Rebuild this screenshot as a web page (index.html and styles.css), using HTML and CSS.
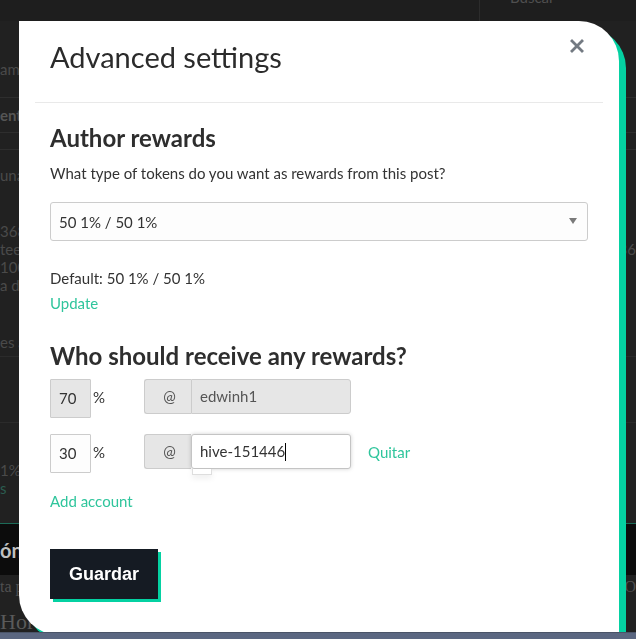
FILE: index.html
```html
<!DOCTYPE html>
<html lang="es">
<head>
<meta charset="utf-8">
<title>Advanced settings</title>
<link rel="stylesheet" href="styles.css">
</head>
<body>
<div class="page">
  <div class="topbar">
    <div class="search"><span class="search-text">Buscar</span></div>
  </div>
  <div class="bg-row r1"><span>amu</span><span></span></div>
  <div class="bg-row r2"><span class="b">ent</span><span></span></div>
  <div class="bg-row r3"><span></span><span></span></div>
  <div class="bg-block r4">
    <div class="bg-line">una</div>
    <div class="bg-para">
      <div class="bg-pl"><span>368</span><span></span></div>
      <div class="bg-pl"><span>tee</span><span>36</span></div>
      <div class="bg-pl"><span>100</span><span></span></div>
      <div class="bg-pl"><span>a de</span><span></span></div>
    </div>
  </div>
  <div class="bg-row r5"><span>es a</span><span></span></div>
  <div class="bg-row r6"><span></span><span></span></div>
  <div class="bg-block r7">
    <div class="bg-line">1%</div>
    <div class="bg-line green">s</div>
  </div>
  <div class="bg-dark"><span>ón</span></div>
  <div class="bg-row r8"><span>ta p</span><span>O</span></div>
  <div class="bg-hor">Hor</div>
</div>
<div class="bottombar"></div>

<div class="modal">
  <div class="modal-header">
    <h1 class="modal-title">Advanced settings</h1>
    <button class="close" type="button" aria-label="Close">
      <svg width="14" height="14" viewBox="0 0 14 14"><path d="M2 2 L12 12 M12 2 L2 12" stroke="#737a82" stroke-width="2.8" stroke-linecap="square"/></svg>
    </button>
  </div>
  <div class="modal-body">
    <h2 class="section-title first">Author rewards</h2>
    <p class="text">What type of tokens do you want as rewards from this post?</p>
    <div class="select">
      <span>50 1% / 50 1%</span>
      <svg class="caret" width="8" height="6" viewBox="0 0 8 6"><path d="M0 0 H8 L4 6 Z" fill="#7a7a7a"/></svg>
    </div>
    <p class="text default">Default: 50 1% / 50 1%</p>
    <a class="link update">Update</a>

    <h2 class="section-title second">Who should receive any rewards?</h2>
    <div class="benef-row">
      <div class="pct disabled">70</div>
      <span class="pct-sign">%</span>
      <div class="acct disabled">
        <span class="at">@</span>
        <span class="acct-input">edwinh1</span>
      </div>
    </div>
    <div class="benef-row">
      <div class="pct">30</div>
      <span class="pct-sign">%</span>
      <div class="acct">
        <span class="at">@</span>
        <span class="acct-input focus">hive-151446<span class="cursor"></span><span class="popup"></span></span>
      </div>
      <a class="link quitar">Quitar</a>
    </div>
    <a class="link add">Add account</a>
    <div class="actions">
      <button class="save" type="button">Guardar</button>
    </div>
  </div>
</div>
</body>
</html>
```
FILE: styles.css
```css
* { box-sizing: border-box; }
html, body { margin: 0; padding: 0; }
body {
  width: 636px;
  height: 639px;
  overflow: hidden;
  background: #212121;
  font-family: Lato, "Open Sans", sans-serif;
}

/* background page */
.page { color: #4a4a4a; font-size: 15px; }
.topbar {
  height: 21px;
  overflow: hidden;
  display: flex;
  align-items: flex-end;
  justify-content: flex-end;
  background: #1e1e1e;
}
.search {
  height: 40px;
  width: 157px;
  border-left: 1px solid #2c2c2c;
  display: flex;
  align-items: flex-end;
  padding: 0 0 16px 30px;
  flex-shrink: 0;
}
.search-text { color: #4f4f4f; font-size: 15px; line-height: 16px; }
.bg-row {
  display: flex;
  justify-content: space-between;
  align-items: center;
  border-bottom: 1px solid #2e2e2e;
}
.bg-row.r1 { height: 77px; padding-top: 20px; }
.bg-row.r2 { height: 35px; color: #555; }
.bg-row.r2 .b { font-weight: 700; }
.bg-row.r3 { height: 17px; }
.bg-block.r4 { padding-top: 16px; height: 177px; }
.bg-line { line-height: 18px; }
.bg-para { margin-top: 38px; }
.bg-pl { display: flex; justify-content: space-between; line-height: 18px; }
.bg-row.r5 { height: 30px; border-bottom-color: #2b2b2b; }
.bg-row.r6 { height: 66px; border-bottom-color: #2b2b2b; }
.bg-block.r7 { height: 100px; padding-top: 38px; }
.bg-line.green { color: #2b5d50; }
.bg-dark {
  height: 52px;
  background: #0c0c0c;
  border-top: 1px solid #1c6b58;
  display: flex;
  align-items: center;
  color: #bfbfbf;
  font-weight: 700;
  font-size: 20px;
}
.bg-row.r8 { height: 32px; border: none; font-family: "Liberation Serif", serif; color: #505050; font-size: 16px; align-items: flex-start; padding-top: 3px; }
.bg-hor { font-family: "Liberation Serif", serif; font-size: 22px; color: #5a5a5a; line-height: 30px; }

.bottombar {
  position: fixed;
  left: 0;
  right: 0;
  bottom: 0;
  height: 7px;
  background: #5b6781;
  border-top: 1px solid #4a5468;
  z-index: 2;
}

/* modal */
.modal {
  position: fixed;
  left: 19px;
  top: 21px;
  width: 600px;
  height: 614px;
  background: #ffffff;
  border-radius: 0 40px 0 40px;
  box-shadow: 7px 7px 0 #04d1a2;
  z-index: 1;
  color: #333333;
}
.modal-header {
  margin: 0 16px;
  padding: 19px 0 28px 15px;
  border-bottom: 1px solid #e9e9e9;
  display: flex;
  justify-content: space-between;
  align-items: flex-start;
}
.modal-title {
  margin: 0;
  font-size: 29px;
  line-height: 34px;
  font-weight: 400;
  color: #2b2b2b;
}
.close {
  border: none;
  background: none;
  padding: 0;
  margin: -1px 19px 0 0;
  width: 14px;
  height: 14px;
  display: block;
}
.close svg { display: block; }

.modal-body { padding: 0 31px; }
.section-title {
  margin: 0;
  font-size: 24px;
  line-height: 29px;
  font-weight: 700;
  color: #2e2e2e;
}
.section-title.first { margin-top: 20px; }
.section-title.second { margin-top: 28px; }
.text { margin: 0; font-size: 15px; line-height: 20px; color: #333; }
.section-title.first + .text { margin-top: 11px; }
.select {
  margin-top: 19px;
  width: 538px;
  height: 39px;
  border: 1px solid #cccccc;
  border-radius: 3px;
  background: #fdfdfd;
  display: flex;
  align-items: center;
  justify-content: space-between;
  padding: 0 10px 0 8px;
  font-size: 15px;
  color: #333;
}
.caret { display: block; margin-top: -2px; }
.text.default { margin-top: 27px; }
.link {
  display: block;
  color: #2fc59c;
  font-size: 15px;
  line-height: 20px;
  cursor: pointer;
}
.update { margin-top: 5px; }

.benef-row {
  display: flex;
  align-items: flex-start;
  margin-top: 9px;
}
.benef-row + .benef-row { margin-top: 16px; }
.pct {
  width: 41px;
  height: 39px;
  border: 1px solid #cccccc;
  background: #fdfdfd;
  font-size: 15px;
  line-height: 37px;
  padding-left: 8px;
  color: #333;
  border-radius: 1px;
}
.pct.disabled { background: #e6e6e6; }
.pct-sign {
  width: 53px;
  padding-left: 2px;
  font-size: 15px;
  line-height: 20px;
  margin-top: 8px;
  color: #333;
}
.acct {
  display: flex;
  height: 35px;
  width: 207px;
}
.at {
  width: 47px;
  height: 35px;
  border: 1px solid #cccccc;
  border-right: none;
  border-radius: 3px 0 0 3px;
  background: #e6e6e6;
  text-align: center;
  line-height: 33px;
  font-size: 15px;
  color: #555;
  padding-left: 3px;
}
.acct-input {
  position: relative;
  width: 160px;
  height: 35px;
  border: 1px solid #cccccc;
  border-radius: 0 3px 3px 0;
  background: #e6e6e6;
  line-height: 33px;
  padding-left: 8px;
  font-size: 15px;
  color: #555;
}
.acct-input.focus {
  background: #ffffff;
  color: #333;
  border-color: #c4c4c4;
  border-radius: 3px;
  box-shadow: 0 0 4px rgba(0,0,0,0.18);
}
.cursor {
  display: inline-block;
  width: 1px;
  height: 18px;
  background: #000;
  vertical-align: -4px;
}
.popup {
  position: absolute;
  left: 0;
  top: 34px;
  width: 20px;
  height: 6px;
  background: #fff;
  border: 1px solid #dedede;
  border-top: none;
  box-shadow: 0 3px 6px rgba(0,0,0,0.08);
}
.quitar { margin: 8px 0 0 17px; }
.add { margin-top: 18px; }

.actions { margin-top: 38px; }
.save {
  display: block;
  width: 108px;
  height: 50px;
  border: none;
  background: #151b23;
  color: #ffffff;
  font-family: "Liberation Sans", Arial, sans-serif;
  font-weight: 700;
  font-size: 18px;
  text-align: left;
  padding: 0 0 0 19px;
  box-shadow: 3px 3px 0 #04d1a2;
  border-radius: 0;
}
```
